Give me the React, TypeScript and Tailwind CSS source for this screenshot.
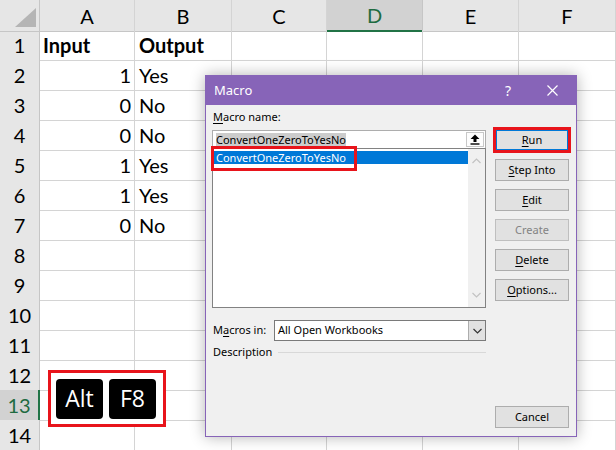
import React from 'react';

// ---------------------------------------------------------------------------
// Sheet data
// ---------------------------------------------------------------------------

const columns = ['A', 'B', 'C', 'D', 'E', 'F'];

const data: Record<number, [string, string]> = {
  1: ['Input', 'Output'],
  2: ['1', 'Yes'],
  3: ['0', 'No'],
  4: ['0', 'No'],
  5: ['1', 'Yes'],
  6: ['1', 'Yes'],
  7: ['0', 'No'],
};

const rows = Array.from({ length: 14 }, (_, i) => i + 1);

const gridCols = 'grid grid-cols-[40px_95px_97px_95px_96px_96px_97px]';

function Underline({ children }: { children: React.ReactNode }) {
  return <span className="underline underline-offset-2">{children}</span>;
}

function DialogButton({
  children,
  disabled,
  focused,
  className = '',
}: {
  children: React.ReactNode;
  disabled?: boolean;
  focused?: boolean;
  className?: string;
}) {
  return (
    <div
      className={`relative h-[22px] flex items-center justify-center bg-[#e1e1e1] ${
        focused
          ? 'border-2 border-[#0078d7]'
          : disabled
          ? 'border border-[#bfbfbf] text-[#838383]'
          : 'border border-[#adadad]'
      } ${className}`}
    >
      {children}
      {focused && (
        <span className="absolute -inset-[4px] border-[3px] border-[#e8141b]" />
      )}
    </div>
  );
}

function Chevron({ up, color = '#c2c2c2' }: { up?: boolean; color?: string }) {
  return (
    <svg width="9" height="6" viewBox="0 0 9 6">
      <polyline
        points={up ? '0.5,5 4.5,1 8.5,5' : '0.5,1 4.5,5 8.5,1'}
        fill="none"
        stroke={color}
        strokeWidth="1.2"
      />
    </svg>
  );
}

// ---------------------------------------------------------------------------
// Component
// ---------------------------------------------------------------------------

export default function App() {
  return (
    <div className="relative w-[616px] h-[450px] overflow-hidden bg-white font-['Lato',sans-serif] text-[20px] text-black">
      {/* Column headers */}
      <div className={`${gridCols} h-[30px]`}>
        <div className="relative bg-[#e6e6e6] border-r border-b border-[#c6c6c6]">
          <svg className="absolute left-[15px] top-[8px]" width="21" height="19" viewBox="0 0 21 19">
            <polygon points="21,0 21,19 0,19" fill="#b5b5b5" />
          </svg>
        </div>
        {columns.map((c) => (
          <div
            key={c}
            className={`flex items-center justify-center border-r ${
              c === 'D'
                ? 'bg-[#d2d2d2] border-b-2 border-b-[#217346] border-r-[#c6c6c6] text-[#1e6b41]'
                : 'bg-[#e6e6e6] border-b border-[#c6c6c6] border-r-[#d4d4d4]'
            }`}
          >
            {c}
          </div>
        ))}
      </div>

      {/* Rows */}
      {rows.map((r) => {
        const row = data[r];
        return (
          <div key={r} className={`${gridCols} h-[30px]`}>
            <div
              className={`flex items-center justify-center border-b border-[#c6c6c6] ${
                r === 13
                  ? 'bg-[#d2d2d2] border-r-2 border-r-[#217346] text-[#1e6b41]'
                  : 'bg-[#e6e6e6] border-r'
              }`}
            >
              {r}
            </div>
            <div
              className={`flex items-center border-r border-b border-[#d4d4d4] ${
                r === 1 ? 'pl-[3px] font-bold' : 'justify-end pr-[3px]'
              }`}
            >
              {row?.[0]}
            </div>
            <div
              className={`flex items-center pl-[4px] border-r border-b border-[#d4d4d4] ${
                r === 1 ? 'font-bold' : ''
              }`}
            >
              {row?.[1]}
            </div>
            {[0, 1, 2, 3].map((i) => (
              <div key={i} className="border-r border-b border-[#d4d4d4]" />
            ))}
          </div>
        );
      })}

      {/* Alt + F8 shortcut callout */}
      <div className="absolute left-[48px] top-[370px] w-[118px] h-[57px] bg-white border-[3px] border-[#e8141b] flex items-center gap-[6px] pl-[5px]">
        <div className="w-[47px] h-[40px] rounded-[4px] bg-black text-white text-[23px] flex items-center justify-center font-['Open_Sans',sans-serif]">
          Alt
        </div>
        <div className="w-[47px] h-[40px] rounded-[4px] bg-black text-white text-[23px] flex items-center justify-center font-['Open_Sans',sans-serif]">
          F8
        </div>
      </div>

      {/* Macro dialog */}
      <div className="absolute left-[205px] top-[75px] w-[372px] h-[362px] border border-[#8764b8] bg-[#f0f0f0] shadow-[0_0_14px_rgba(0,0,0,0.3)] flex flex-col font-['Noto_Sans',sans-serif] text-[11px] text-black">
        {/* Title bar */}
        <div className="h-[29px] bg-[#8764b8] flex items-center pl-[8px] text-white text-[13px]">
          <span>Macro</span>
          <span className="ml-auto mr-[36px] text-[14px]">?</span>
          <svg className="mr-[18px]" width="11" height="11" viewBox="0 0 11 11">
            <path d="M0.5 0.5 L10.5 10.5 M10.5 0.5 L0.5 10.5" stroke="#fff" strokeWidth="1.2" />
          </svg>
        </div>

        {/* Body */}
        <div className="flex flex-1 pl-[6px] pr-[7px] pb-[8px]">
          {/* Left column */}
          <div className="w-[274px] flex flex-col">
            <div className="pt-[4px] leading-[16px] pl-[1px]">
              <Underline>M</Underline>acro name:
            </div>
            <div className="mt-[5px] h-[19px] bg-white border border-[#adadad] flex items-center pl-[3px]">
              <span className="bg-[#cccccc] leading-[13px]">ConvertOneZeroToYesNo</span>
              <div className="ml-auto mr-[1px] w-[18px] h-[15px] bg-[#fdfdfd] border border-[#c8c8c8] flex items-center justify-center">
                <svg width="10" height="11" viewBox="0 0 10 11">
                  <path d="M5 0.5 L9.5 5 L6.5 5 L6.5 8 L3.5 8 L3.5 5 L0.5 5 Z" fill="#000" />
                  <rect x="0.5" y="9.3" width="9" height="1.4" fill="#000" />
                </svg>
              </div>
            </div>
            <div className="relative -mt-px h-[160px] bg-white border border-[#828282] flex">
              <div className="flex-1 pt-[2px]">
                <div className="h-[13px] bg-[#0078d7] text-white leading-[13px] pl-[3px]">
                  ConvertOneZeroToYesNo
                </div>
              </div>
              <div className="w-[17px] bg-[#f0f0f0] flex flex-col items-center justify-between py-[9px]">
                <Chevron up />
                <Chevron />
              </div>
              <span className="absolute left-[-2px] top-[-3px] w-[146px] h-[25px] border-[3px] border-[#e8141b]" />
            </div>

            <div className="mt-[12px] flex items-center">
              <span className="w-[62px] pl-[1px]">
                M<Underline>a</Underline>cros in:
              </span>
              <div className="flex-1 h-[21px] bg-white border border-[#7a7a7a] flex items-center pl-[3px]">
                <span>All Open Workbooks</span>
                <div className="ml-auto w-[17px] h-full bg-[#e1e1e1] border-l border-[#adadad] flex items-center justify-center">
                  <Chevron color="#333" />
                </div>
              </div>
            </div>

            <div className="mt-[3px] flex items-center leading-[16px] pl-[1px]">
              <span>Description</span>
              <div className="flex-1 ml-[6px] h-px bg-[#d8d8d8]" />
            </div>
          </div>

          {/* Right column */}
          <div className="ml-[9px] w-[74px] flex flex-col gap-[8px] pt-[24px]">
            <DialogButton focused>
              <Underline>R</Underline>un
            </DialogButton>
            <DialogButton>
              <Underline>S</Underline>tep Into
            </DialogButton>
            <DialogButton>
              <Underline>E</Underline>dit
            </DialogButton>
            <DialogButton disabled>Create</DialogButton>
            <DialogButton>
              <Underline>D</Underline>elete
            </DialogButton>
            <DialogButton>
              <Underline>O</Underline>ptions...
            </DialogButton>
            <DialogButton className="mt-auto">Cancel</DialogButton>
          </div>
        </div>
      </div>
    </div>
  );
}
